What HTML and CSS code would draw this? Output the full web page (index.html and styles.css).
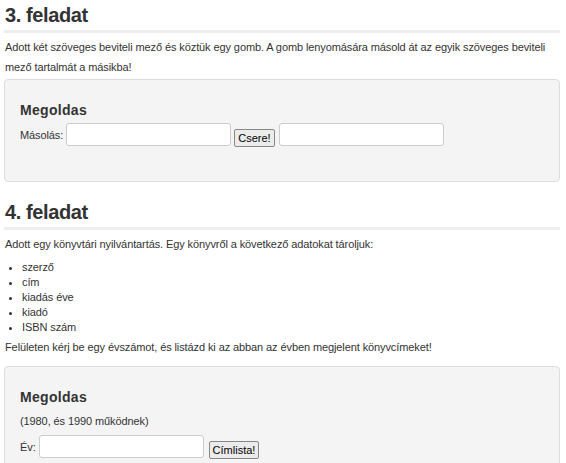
FILE: index.html
```html
<!DOCTYPE html>
<html lang="hu">
<head>
  <meta charset="UTF-8">
  <title>Feladatok</title>
  <link rel="stylesheet" href="styles.css">
</head>
<body>
  <!-- 3. feladat -->
  <div class="task">
    <h2>3. feladat</h2>
    <p class="desc">Adott két szöveges beviteli mező és köztük egy gomb. A gomb lenyomására másold át az egyik szöveges beviteli mező tartalmát a másikba!</p>
    <div class="solution">
      <h3>Megoldas</h3>
      <div class="row">
        <label for="copyFrom">Másolás:</label>
        <input type="text" id="copyFrom">
        <button type="button" id="swapButton">Csere!</button>
        <input type="text" id="copyTo">
      </div>
    </div>
  </div>

  <!-- 4. feladat -->
  <div class="task">
    <h2>4. feladat</h2>
    <p class="desc">Adott egy könyvtári nyilvántartás. Egy könyvről a következő adatokat tároljuk:</p>
    <ul class="fields">
      <li>szerző</li>
      <li>cím</li>
      <li>kiadás éve</li>
      <li>kiadó</li>
      <li>ISBN szám</li>
    </ul>
    <p class="desc">Felületen kérj be egy évszámot, és listázd ki az abban az évben megjelent könyvcímeket!</p>
    <div class="solution">
      <h3>Megoldas</h3>
      <p class="hint">(1980, és 1990 működnek)</p>
      <div class="row">
        <label for="year">Év:</label>
        <input type="text" id="year">
        <button type="button" id="listButton">Címlista!</button>
      </div>
    </div>
  </div>
</body>
</html>
```

FILE: styles.css
```css
/* Base */
body {
  margin: 0;
  padding: 0 6px 0 4px;
  font-family: "Liberation Sans", Arial, sans-serif;
  font-size: 11px;
  letter-spacing: -0.1px;
  color: #333;
  background-color: #fff;
}

/* Task headings */
h2 {
  margin: 0;
  padding: 3px 1px;
  font-size: 20px;
  line-height: 24px;
  letter-spacing: -0.4px;
  color: #333;
  border-bottom: 3px solid #eee;
}

.task + .task h2 {
  margin-top: 15px;
}

.desc {
  margin: 4px 1px 0;
  line-height: 20px;
}

/* List of book fields */
.fields {
  margin: 6px 0 0;
  padding-left: 18px;
  line-height: 15px;
}

.fields + .desc {
  margin-top: 2px;
}

/* Solution boxes */
.solution {
  margin-top: 2px;
  padding: 20px 15px 35px;
  background-color: #f4f4f4;
  border: 1px solid #ddd;
  border-radius: 4px;
}

.fields + .desc + .solution {
  margin-top: 9px;
}

h3 {
  margin: 0;
  font-size: 14px;
  line-height: 20px;
  letter-spacing: 0.3px;
}

.hint {
  margin: 7px 0 0;
  line-height: 14px;
}

.row {
  display: flex;
  align-items: flex-end;
  gap: 3px;
  margin-top: 3px;
}

.hint + .row {
  margin-top: 7px;
}

.row label {
  align-self: center;
}

.row button + input {
  margin-left: 1px;
}

#listButton {
  margin-left: 2px;
}

input {
  width: 165px;
  height: 23px;
  box-sizing: border-box;
  padding: 2px 4px;
  border: 1px solid #ccc;
  border-radius: 3px;
  background-color: #fff;
  font-family: inherit;
  font-size: 11px;
}

button {
  height: 18px;
  padding: 0 3px;
  margin-bottom: -1px;
  border: 1px solid #888;
  border-radius: 2px;
  background-color: #ececec;
  font-family: inherit;
  font-size: 11px;
  color: #000;
  cursor: pointer;
}
```
